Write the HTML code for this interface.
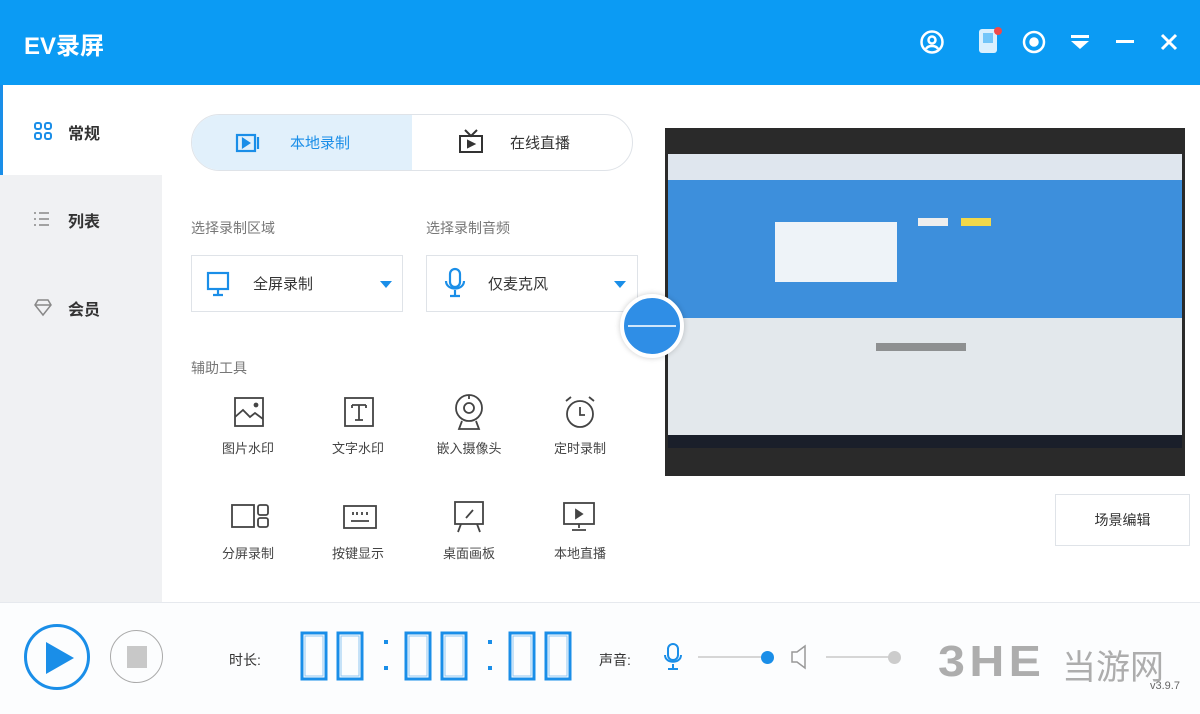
<!DOCTYPE html>
<html><head><meta charset="utf-8"><style>
*{margin:0;padding:0;box-sizing:border-box}
body{width:1200px;height:714px;overflow:hidden;background:#fff;font-family:"Liberation Sans","Noto Sans CJK SC",sans-serif;position:relative;color:#333}
.a{position:absolute}
.hdr{left:0;top:0;width:1200px;height:85px;background:#0b9bf4}
.t{font-size:15px;color:#333}
.lbl{font-size:14px;color:#777}
svg{position:absolute;overflow:visible}
.tool{position:absolute;width:90px;text-align:center;font-size:13px;color:#444}
</style></head><body>
<div class="a hdr"></div>
<div class="a" style="left:24px;top:26px;color:#fff;font-size:24px;font-weight:bold">EV录屏</div>
<svg style="left:920px;top:30px" width="24" height="24" fill="none" stroke="#fff" stroke-width="2.5"><circle cx="12" cy="12" r="10.5"/><circle cx="12" cy="10" r="3.5"/><path d="M6 19c2-4 10-4 12 0"/></svg>
<svg style="left:978px;top:27px" width="24" height="28"><rect x="1" y="2" width="18" height="24" rx="3" fill="#fff" opacity=".85"/><rect x="5" y="6" width="10" height="10" fill="#0b9bf4" opacity=".5"/><circle cx="20" cy="4" r="4" fill="#f04a4a"/></svg>
<svg style="left:1022px;top:30px" width="24" height="24" fill="none" stroke="#fff" stroke-width="2.5"><circle cx="12" cy="12" r="10"/><circle cx="12" cy="12" r="3.5" fill="#fff"/></svg>
<svg style="left:1070px;top:34px" width="20" height="16" fill="#fff"><rect x="1" y="1" width="18" height="3"/><path d="M1 7h18l-9 8z"/></svg>
<div class="a" style="left:1116px;top:40px;width:18px;height:3px;background:#fff"></div>
<svg style="left:1160px;top:33px" width="18" height="18" stroke="#fff" stroke-width="3"><path d="M2 2l14 14M16 2L2 16"/></svg>
<div class="a" style="left:0;top:85px;width:3px;height:90px;background:#1a8ee8"></div>
<div class="a" style="left:0;top:175px;width:162px;height:428px;background:#f0f1f3"></div>
<svg style="left:34px;top:122px" width="18" height="18" fill="none" stroke="#1a8ee8" stroke-width="2"><rect x="1" y="1" width="6" height="6" rx="2"/><rect x="11" y="1" width="6" height="6" rx="2"/><rect x="1" y="11" width="6" height="6" rx="2"/><rect x="11" y="11" width="6" height="6" rx="2"/></svg>
<div class="a t" style="left:68px;top:120px;font-size:16px;font-weight:bold">常规</div>
<svg style="left:33px;top:211px" width="18" height="16" stroke="#888" stroke-width="1.5"><path d="M1 2h2M6 2h10M1 8h2M6 8h10M1 14h2M6 14h10"/></svg>
<div class="a t" style="left:68px;top:208px;font-size:16px;font-weight:bold">列表</div>
<svg style="left:34px;top:298px" width="18" height="18" fill="none" stroke="#888" stroke-width="1.5"><path d="M4 2h10l3 5-8 10-8-10z M1 7h16"/></svg>
<div class="a t" style="left:68px;top:296px;font-size:16px;font-weight:bold">会员</div>
<div class="a" style="left:191px;top:114px;width:442px;height:57px;border:1px solid #dfe3e8;border-radius:29px;overflow:hidden;background:#fff"><div style="width:220px;height:100%;background:#e1f0fb"></div></div>
<svg style="left:236px;top:133px" width="26" height="20" fill="none" stroke="#1a8ee8" stroke-width="2.2"><rect x="1" y="2" width="18" height="16"/><path d="M7 6l6 4-6 4z" fill="#1a8ee8"/><path d="M22 4v12"/></svg>
<div class="a" style="left:290px;top:132px;font-size:15px;color:#1a8ee8">本地录制</div>
<svg style="left:459px;top:128px" width="24" height="26" fill="none" stroke="#333" stroke-width="2"><path d="M6 2l6 6 6-6"/><rect x="1" y="8" width="22" height="16"/><path d="M9 13l6 3-6 3z" fill="#333"/></svg>
<div class="a t" style="left:510px;top:132px">在线直播</div>
<div class="a lbl" style="left:191px;top:218px">选择录制区域</div>
<div class="a lbl" style="left:426px;top:218px">选择录制音频</div>
<div class="a" style="left:191px;top:255px;width:212px;height:57px;border:1px solid #dfe3e8"></div>
<div class="a" style="left:426px;top:255px;width:212px;height:57px;border:1px solid #dfe3e8"></div>
<svg style="left:207px;top:271px" width="24" height="26" fill="none" stroke="#1a8ee8" stroke-width="2.2"><rect x="1" y="2" width="20" height="16"/><path d="M11 18v5M6 24h10"/></svg>
<div class="a t" style="left:253px;top:273px">全屏录制</div>
<svg style="left:380px;top:281px" width="12" height="8" fill="#1a8ee8"><path d="M0 0h12l-6 7z"/></svg>
<svg style="left:444px;top:268px" width="22" height="30" fill="none" stroke="#1a8ee8" stroke-width="2.2"><rect x="6" y="1" width="10" height="18" rx="5"/><path d="M2 13c0 10 18 10 18 0M11 22v5M6 28h10"/></svg>
<div class="a t" style="left:488px;top:273px">仅麦克风</div>
<svg style="left:614px;top:281px" width="12" height="8" fill="#1a8ee8"><path d="M0 0h12l-6 7z"/></svg>
<div class="a lbl" style="left:191px;top:358px">辅助工具</div>
<svg style="left:234px;top:397px" width="30" height="30" fill="none" stroke="#444" stroke-width="1.8"><rect x="1" y="1" width="28" height="28"/><path d="M1 20l8-7 7 7 5-4 8 6"/><circle cx="22" cy="8" r="1.5" fill="#444"/></svg>
<svg style="left:344px;top:397px" width="30" height="30" fill="none" stroke="#444" stroke-width="1.8"><rect x="1" y="1" width="28" height="28"/><path d="M8 8h14M8 8v3M22 8v3M15 8v15M11 23h8"/></svg>
<svg style="left:453px;top:394px" width="32" height="36" fill="none" stroke="#444" stroke-width="1.8"><circle cx="16" cy="14" r="13"/><circle cx="16" cy="14" r="5"/><path d="M16 1v4M9 27l-3 8h20l-3-8"/></svg>
<svg style="left:563px;top:395px" width="34" height="34" fill="none" stroke="#444" stroke-width="1.8"><circle cx="17" cy="19" r="13"/><path d="M17 12v8h5M3 6l5-4M31 6l-5-4"/></svg>
<svg style="left:231px;top:504px" width="38" height="24" fill="none" stroke="#444" stroke-width="1.8"><rect x="1" y="1" width="22" height="22"/><rect x="27" y="1" width="10" height="10" rx="2"/><rect x="27" y="14" width="10" height="9" rx="2"/></svg>
<svg style="left:343px;top:505px" width="34" height="24" fill="none" stroke="#444" stroke-width="1.8"><rect x="1" y="1" width="32" height="22"/><path d="M10 7v3M14 7v3M19 7v3M24 7v3M8 16h18"/></svg>
<svg style="left:453px;top:500px" width="32" height="34" fill="none" stroke="#444" stroke-width="1.8"><rect x="2" y="2" width="28" height="22"/><path d="M13 18l7-8M8 24l-3 8M24 24l3 8"/></svg>
<svg style="left:563px;top:502px" width="32" height="30" fill="none" stroke="#444" stroke-width="1.8"><rect x="1" y="1" width="30" height="21"/><path d="M13 8l6 4-6 4z" fill="#444"/><path d="M16 22v4M9 28h14"/></svg>
<div class="tool" style="left:203px;top:438px">图片水印</div>
<div class="tool" style="left:313px;top:438px">文字水印</div>
<div class="tool" style="left:424px;top:438px">嵌入摄像头</div>
<div class="tool" style="left:535px;top:438px">定时录制</div>
<div class="tool" style="left:203px;top:543px">分屏录制</div>
<div class="tool" style="left:313px;top:543px">按键显示</div>
<div class="tool" style="left:424px;top:543px">桌面画板</div>
<div class="tool" style="left:535px;top:543px">本地直播</div>
<div class="a" style="left:665px;top:128px;width:520px;height:348px;background:#2a2a2a"></div>
<div class="a" style="left:668px;top:154px;width:514px;height:26px;background:#dfe6ee"></div>
<div class="a" style="left:668px;top:180px;width:514px;height:138px;background:#3d8fdc"></div>
<div class="a" style="left:775px;top:222px;width:122px;height:60px;background:#eef3f8"></div>
<div class="a" style="left:918px;top:218px;width:30px;height:8px;background:#eee"></div>
<div class="a" style="left:961px;top:218px;width:30px;height:8px;background:#f2d84a"></div>
<div class="a" style="left:668px;top:318px;width:514px;height:117px;background:#e3e8ec"></div>
<div class="a" style="left:876px;top:343px;width:90px;height:8px;background:#555;opacity:.6"></div>
<div class="a" style="left:668px;top:435px;width:514px;height:13px;background:#1a1f2a"></div>
<div class="a" style="left:620px;top:294px;width:64px;height:64px;border-radius:50%;background:#2f8ee6;border:4px solid #fff;box-shadow:0 0 6px rgba(0,0,0,.2)"></div>
<div class="a" style="left:628px;top:325px;width:48px;height:2px;background:#cfe6fb"></div>
<div class="a" style="left:1055px;top:494px;width:135px;height:52px;border:1px solid #dfe3e8;font-size:14px;color:#333;text-align:center;line-height:50px">场景编辑</div>
<div class="a" style="left:0;top:602px;width:1200px;height:1px;background:#e6e9ee"></div>
<div class="a" style="left:0;top:603px;width:1200px;height:111px;background:#fcfdfe"></div>
<div class="a" style="left:24px;top:624px;width:66px;height:66px;border-radius:50%;border:3px solid #1a8ee8"></div>
<svg style="left:44px;top:641px" width="32" height="34" fill="#1a8ee8"><path d="M2 1l28 16L2 33z"/></svg>
<div class="a" style="left:110px;top:630px;width:53px;height:53px;border-radius:50%;border:1.5px solid #aaa"></div>
<div class="a" style="left:127px;top:646px;width:20px;height:22px;background:#c8c8c8"></div>
<div class="a" style="left:229px;top:650px;font-size:14px;color:#333">时长:</div>
<svg style="left:0;top:0" width="1200" height="714" fill="none" stroke="#1a8ee8" stroke-width="3">
<g id="d"><rect x="302" y="633" width="24" height="46"/><rect x="338" y="633" width="24" height="46"/></g>
<rect x="406" y="633" width="24" height="46"/><rect x="442" y="633" width="24" height="46"/>
<rect x="510" y="633" width="24" height="46"/><rect x="546" y="633" width="24" height="46"/>
<g stroke="#8fc6f3" stroke-width="1"><rect x="305" y="636" width="18" height="40"/><rect x="341" y="636" width="18" height="40"/><rect x="409" y="636" width="18" height="40"/><rect x="445" y="636" width="18" height="40"/><rect x="513" y="636" width="18" height="40"/><rect x="549" y="636" width="18" height="40"/></g>
<g fill="#1a8ee8" stroke="none"><rect x="384" y="640" width="4" height="4"/><rect x="384" y="666" width="4" height="4"/><rect x="488" y="640" width="4" height="4"/><rect x="488" y="666" width="4" height="4"/></g>
</svg>
<div class="a" style="left:599px;top:650px;font-size:14px;color:#333">声音:</div>
<svg style="left:664px;top:643px" width="18" height="28" fill="none" stroke="#1a8ee8" stroke-width="2"><rect x="4" y="1" width="10" height="16" rx="5"/><path d="M1 12c0 9 16 9 16 0M9 21v4M4 26h10"/></svg>
<div class="a" style="left:698px;top:656px;width:68px;height:1.5px;background:#d6d6d6"></div>
<div class="a" style="left:761px;top:651px;width:13px;height:13px;border-radius:50%;background:#1a8ee8"></div>
<svg style="left:791px;top:645px" width="20" height="24" fill="none" stroke="#999" stroke-width="1.5"><path d="M1 7h5l8-6v22l-8-6H1z"/></svg>
<div class="a" style="left:826px;top:656px;width:66px;height:1.5px;background:#d6d6d6"></div>
<div class="a" style="left:888px;top:651px;width:13px;height:13px;border-radius:50%;background:#ccc"></div>
<div class="a" style="left:938px;top:637px;font-size:44px;font-weight:bold;color:#9a9a9a;opacity:.8;letter-spacing:4px;transform:scaleX(1.1);transform-origin:left">3HE</div>
<div class="a" style="left:1062px;top:640px;font-size:34px;color:#9a9a9a;opacity:.8">当游网</div>
<div class="a" style="left:1150px;top:680px;font-size:11px;color:#666">v3.9.7</div>
</body></html>
